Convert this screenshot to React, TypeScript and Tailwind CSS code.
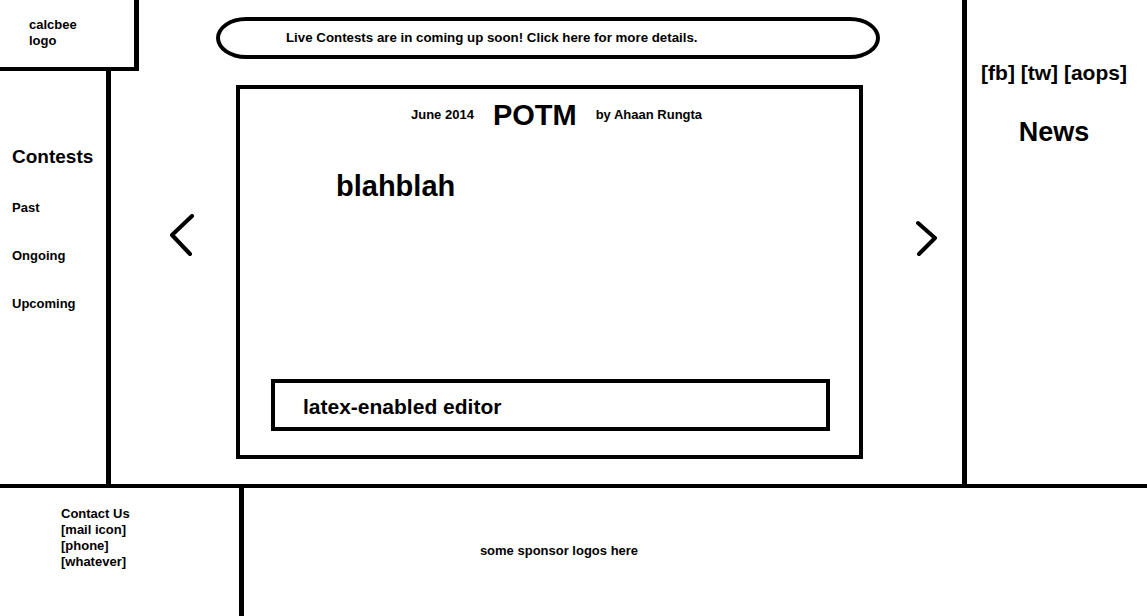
import React from 'react';

const font = "font-['Liberation_Sans',Arial,sans-serif]";

const ChevronLeft: React.FC = () => (
  <svg width="28" height="44" viewBox="0 0 28 44" className="block">
    <path d="M23 2 L3 21 L21 40" fill="none" stroke="black" strokeWidth="4" strokeLinecap="round" strokeLinejoin="round" />
  </svg>
);

const ChevronRight: React.FC = () => (
  <svg width="28" height="40" viewBox="0 0 28 40" className="block">
    <path d="M4 3 L21 18 L5 34" fill="none" stroke="black" strokeWidth="4" strokeLinecap="round" strokeLinejoin="round" />
  </svg>
);

export default function App() {
  return (
    <div className={`flex h-[616px] w-[1147px] flex-col overflow-hidden bg-white text-black ${font}`}>
      <div className="flex h-[488px] border-b-4 border-black">
        {/* left column */}
        <aside className="flex w-[139px] flex-col">
          <div className="h-[71px] border-b-4 border-r-[5px] border-black pl-[29px] pt-[17px] text-[13px] font-bold leading-[16px]">
            calcbee
            <br />
            logo
          </div>
          <div className="-mb-[2px] flex w-[111px] flex-1 flex-col border-r-[5px] border-black pl-[12px] pt-[75px]">
            <span className="text-[19px] font-bold leading-[22px]">Contests</span>
            <ul className="mt-[32px] flex flex-col gap-[32px] text-[13px] font-bold leading-[16px]">
              <li>Past</li>
              <li>Ongoing</li>
              <li>Upcoming</li>
            </ul>
          </div>
        </aside>

        {/* center */}
        <main className="flex flex-1 flex-col">
          <div className="ml-[77px] mt-[17px] flex h-[42px] w-[664px] items-center rounded-[30px/21px] border-4 border-black pl-[66px] text-[13.3px] font-bold">
            Live Contests are in coming up soon! Click here for more details.
          </div>

          <div className="mt-[26px] flex items-start">
            <div className="w-[97px] pl-[30px] pt-[129px]">
              <ChevronLeft />
            </div>

            <section className="flex h-[374px] w-[627px] flex-col border-4 border-black">
              <div className="flex items-center pl-[171px] pt-[9px]">
                <span className="text-[13px] font-bold">June 2014</span>
                <span className="ml-[19px] text-[29px] font-bold leading-[34px]">POTM</span>
                <span className="ml-[19px] text-[13px] font-bold">by Ahaan Rungta</span>
              </div>
              <p className="ml-[96px] mt-[38px] text-[29px] font-bold leading-[32px]">blahblah</p>

              <div className="mb-[24px] ml-[31px] mt-auto flex h-[52px] w-[559px] items-center border-4 border-black pl-[28px] pt-[4px] text-[21px] font-bold">
                latex-enabled editor
              </div>
            </section>

            <div className="pl-[51px] pt-[135px]">
              <ChevronRight />
            </div>
          </div>
        </main>

        {/* right column */}
        <aside className="-mb-[2px] flex w-[185px] flex-col items-center border-l-[5px] border-black pr-[6px] pt-[61px]">
          <span className="text-[21px] font-bold leading-[24px]">[fb] [tw] [aops]</span>
          <span className="mt-[32px] text-[27px] font-bold leading-[30px]">News</span>
        </aside>
      </div>

      <footer className="flex flex-1">
        <div className="w-[244px] border-r-[5px] border-black pl-[61px] pt-[18px] text-[13px] font-bold leading-[16px]">
          <p>Contact Us</p>
          <p>[mail icon]</p>
          <p>[phone]</p>
          <p>[whatever]</p>
        </div>
        <div className="flex flex-1 justify-center pr-[273px] pt-[53px] text-[13px] font-bold">
          some sponsor logos here
        </div>
      </footer>
    </div>
  );
}
